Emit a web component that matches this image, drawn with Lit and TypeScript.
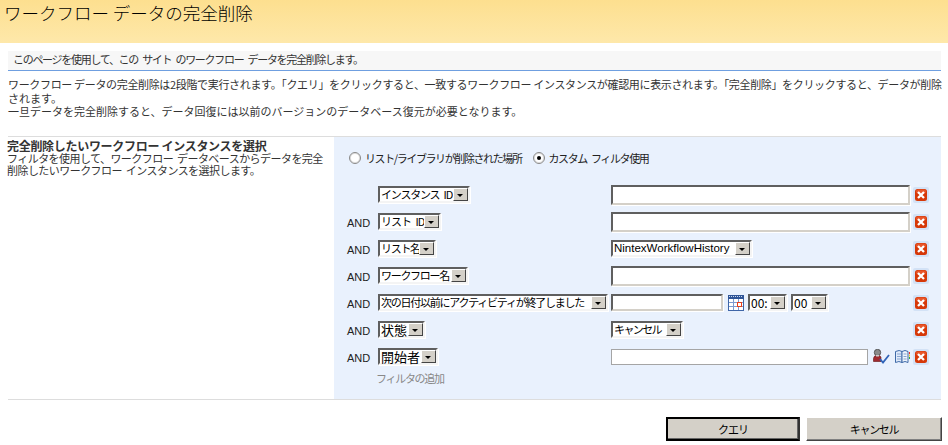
import { LitElement, html, css } from "lit";
import { customElement } from "lit/decorators.js";

const del = html`<svg class="del" width="16" height="16" viewBox="0 0 16 16">
  <rect x="0" y="0" width="16" height="16" rx="2" fill="#d3e2f6"/>
  <rect x="2" y="2" width="12" height="12" rx="2.5" fill="#d63808"/>
  <rect x="3" y="2.5" width="10" height="4" rx="2" fill="#e8562a"/>
  <path d="M5 5 L11 11 M11 5 L5 11" stroke="#fff" stroke-width="2.3"/>
</svg>`;

const cal = html`<svg width="16" height="16" viewBox="0 0 16 16">
  <rect x="0.5" y="2.5" width="15" height="13" fill="#fff" stroke="#3f66a8"/>
  <rect x="0" y="0" width="16" height="4" fill="#2f5597"/>
  <path d="M1 1h1M3 1h1M5 1h1M7 1h1M9 1h1M11 1h1M13 1h1" stroke="#cdd9ee" stroke-width="1" transform="translate(0 .5)"/>
  <path d="M5.5 4v11M10.5 4v11M1 7.5h14M1 11.5h14" stroke="#7b9bd0"/>
  <rect x="9.5" y="7.5" width="4" height="4" fill="#fff" stroke="#e8401c"/>
</svg>`;

const checkName = html`<svg width="17" height="15" viewBox="0 0 17 15">
  <circle cx="4.5" cy="3.5" r="3.2" fill="#8a8a8a" stroke="#444" stroke-width=".8"/>
  <path d="M.5 12.5 v-3 q0-3 4-3 t3.5 3 v3z" fill="#a02a30" stroke="#611" stroke-width=".6"/>
  <rect x="3" y="6" width="3" height="1.5" fill="#ccc"/>
  <path d="M7 10 l3 3.5 l6-7.5" fill="none" stroke="#2f63b8" stroke-width="1.8"/>
</svg>`;

const book = html`<svg width="15" height="13" viewBox="0 0 15 13">
  <path d="M.5 1.5 q4-2 6.5 0 v11 q-3-2-6.5 0z" fill="#dfeafa" stroke="#3f6aa8"/>
  <path d="M7 1.5 q3-2 6 0 v11 q-3-2-6 0z" fill="#eef4fc" stroke="#3f6aa8"/>
  <path d="M2 4h4M2 6.5h4M2 9h4M8.5 4h3M8.5 6.5h3M8.5 9h3" stroke="#8aa6d0"/>
  <path d="M14.5 2v2" stroke="#e33"/><path d="M14.5 4.5v2" stroke="#ec3"/><path d="M14.5 7v2" stroke="#3a4"/>
</svg>`;

const sel = (label: string, w: number, fs = 11, ls = 0, latin = false) =>
  html`<span class="sel ${latin ? "latin" : ""}" style="width:${w}px;font-size:${fs}px;letter-spacing:${ls}px"><span class="val">${label}</span><span class="arrow"></span></span>`;

@customElement("app-root")
export class AppRoot extends LitElement {
  static styles = css`
    :host { display: block; width: 948px; height: 445px; overflow: hidden; background: #fff; color: #333;
      font-family: "Noto Sans CJK JP", "Liberation Sans", sans-serif; font-size: 11px; line-height: 13px; }
    * { box-sizing: border-box; }
    .title { height: 43px; background: linear-gradient(#fddf8f, #fee8aa); padding: 1px 0 0 4px;
      font-size: 17.5px; line-height: 24px; color: #000; font-weight: 300; white-space: nowrap; }
    .desc { margin: 8px 7px 0 8px; height: 20px; background: #f7f7f7; border-bottom: 1px solid #6f9fe0;
      padding: 1px 0 0 5px; line-height: 14px; letter-spacing: -1.3px; word-spacing: 3px; white-space: nowrap; }
    .info { margin: 7px 7px 0 8px; line-height: 13.5px; height: 58px; white-space: nowrap; }
    .tight { letter-spacing: -0.34px; }
    .section { margin-left: 8px; margin-right: 7px; display: flex; border-top: 1px solid #ddd; border-bottom: 1px solid #ddd; height: 264px; }
    .left { width: 326px; padding: 3px 0 0 0; margin-left: -1px; line-height: 12px; flex: none; letter-spacing: -0.55px; word-spacing: 2px; white-space: nowrap; }
    .left b { display: block; font-size: 12px; line-height: 12px; letter-spacing: -0.3px; word-spacing: 0; }
    .panel { flex: 1; background: #e9f1fd; padding: 13px 0 0 13px; margin-left: 1px; }
    .radios { display: flex; align-items: center; height: 16px; color: #222; letter-spacing: -1.4px; word-spacing: 3px; }
    .radio { width: 12px; height: 12px; border-radius: 50%; background: #fff; border: 1px solid #888; box-shadow: inset 0 0 0 1px #ddd; margin: 0 4px 0 2px; display: flex; align-items: center; justify-content: center; flex: none; }
    .radio.on::after { content: ""; width: 4px; height: 4px; border-radius: 50%; background: #000; }
    .r2 { margin-left: 11px; }
    .rows { margin-top: 15px; }
    .row { display: flex; align-items: center; height: 27px; }
    .and { width: 31px; flex: none; color: #222; font-family: "Liberation Sans", sans-serif; font-size: 11px; padding-top: 3px; }
    .lcol { width: 233px; flex: none; display: flex; }
    .mid { width: 302px; flex: none; display: flex; align-items: center; }
    .sel { display: inline-flex; height: 17px; background: #fff; border: 2px solid; border-color: #5f5f5f #f4f4f4 #f4f4f4 #5f5f5f; box-shadow: 1px 1px 0 #fff; color: #000; align-items: stretch; white-space: nowrap; line-height: 13px; flex: none; word-spacing: 3px; }
    .sel.latin { font-family: "Liberation Sans", sans-serif; }
    .val { flex: 1; padding-left: 1px; min-width: 0; }
    .arrow { width: 15px; flex: none; background: #d4d0c8; border: 1px solid; border-color: #fff #444 #444 #fff; position: relative; }
    .arrow::after { content: ""; position: absolute; left: 3px; top: 5px; border: 3.5px solid transparent; border-top-color: #000; border-bottom: 0; }
    .inp { display: block; height: 20px; width: 299px; background: #fff; border: 2px solid; border-color: #5f5f5f #d4d0c8 #d4d0c8 #5f5f5f; box-shadow: 1px 1px 0 #fff; }
    .inp.date { width: 112px; height: 17px; margin-right: 1px; }
    .inp.people { width: 257px; height: 16px; border: 1px solid #a5a5a5; box-shadow: none; }
    .calw { margin: 0 4px 0 4px; display: flex; }
    .t2 { margin-left: 4px; display: flex; }
    .ck { margin-left: 5px; display: flex; }
    .bk { margin-left: 5px; display: flex; }
    .del { display: block; flex: none; }
    .add { margin: 1px 0 0 29px; color: #888; line-height: 14px; font-size: 11px; letter-spacing: -1.3px; }
    .btns { display: flex; justify-content: flex-end; gap: 6px; margin: 17px 6px 0 0; }
    .btn { height: 24px; width: 136px; background: #d4d0c8; border: 1px solid; border-color: #fff #444 #444 #fff; color: #000; display: flex; align-items: center; justify-content: center; font-size: 11px; box-shadow: inset -1px -1px 0 #808080; letter-spacing: -1.3px; }
    .btn.def { width: 134px; border: 2px solid; border-color: #000 #333 #000 #000; box-shadow: inset -1px -1px 0 #666; letter-spacing: -1px; }
  `;

  render() {
    return html`
      <div class="title">ワークフロー データの完全削除</div>
      <div class="desc">このページを使用して、この サイト のワークフロー データを完全削除します。</div>
      <div class="info"><span class="tight">ワークフロー データの完全削除は2段階で実行されます。「クエリ」をクリックすると、一致するワークフロー インスタンスが確認用に表示されます。「完全削除」をクリックすると、データが削除</span><br>されます。<br>一旦データを完全削除すると、データ回復には以前のバージョンのデータベース復元が必要となります。</div>
      <div class="section">
        <div class="left"><b>完全削除したいワークフロー インスタンスを選択</b>フィルタを使用して、ワークフロー データベースからデータを完全<br>削除したいワークフロー インスタンスを選択します。</div>
        <div class="panel">
          <div class="radios"><span class="radio"></span>リスト/ライブラリが削除された場所<span class="radio on r2"></span>カスタム フィルタ使用</div>
          <div class="rows">
            <div class="row"><span class="and"></span><span class="lcol">${sel("インスタンス ID", 92, 11, -1.2)}</span><span class="mid"><span class="inp"></span></span>${del}</div>
            <div class="row"><span class="and">AND</span><span class="lcol">${sel("リスト ID", 63, 11, -1)}</span><span class="mid"><span class="inp"></span></span>${del}</div>
            <div class="row"><span class="and">AND</span><span class="lcol">${sel("リスト名", 58, 11, -1.3)}</span><span class="mid">${sel("NintexWorkflowHistory", 141, 11.5, 0, true)}</span>${del}</div>
            <div class="row"><span class="and">AND</span><span class="lcol">${sel("ワークフロー名", 90, 11, -1.3)}</span><span class="mid"><span class="inp"></span></span>${del}</div>
            <div class="row"><span class="and">AND</span><span class="lcol">${sel("次の日付以前にアクティビティが終了しました", 230, 11, -1.25)}</span><span class="mid"><span class="inp date"></span><span class="calw">${cal}</span>${sel("00:", 39, 12)}<span class="t2">${sel("00", 37, 12)}</span></span>${del}</div>
            <div class="row"><span class="and">AND</span><span class="lcol">${sel("状態", 47, 13)}</span><span class="mid">${sel("キャンセル", 72, 11, -1.6)}</span>${del}</div>
            <div class="row"><span class="and">AND</span><span class="lcol">${sel("開始者", 60, 13)}</span><span class="mid"><span class="inp people"></span><span class="ck">${checkName}</span><span class="bk">${book}</span></span>${del}</div>
          </div>
          <div class="add">フィルタの追加</div>
        </div>
      </div>
      <div class="btns"><span class="btn def">クエリ</span><span class="btn">キャンセル</span></div>
    `;
  }
}
